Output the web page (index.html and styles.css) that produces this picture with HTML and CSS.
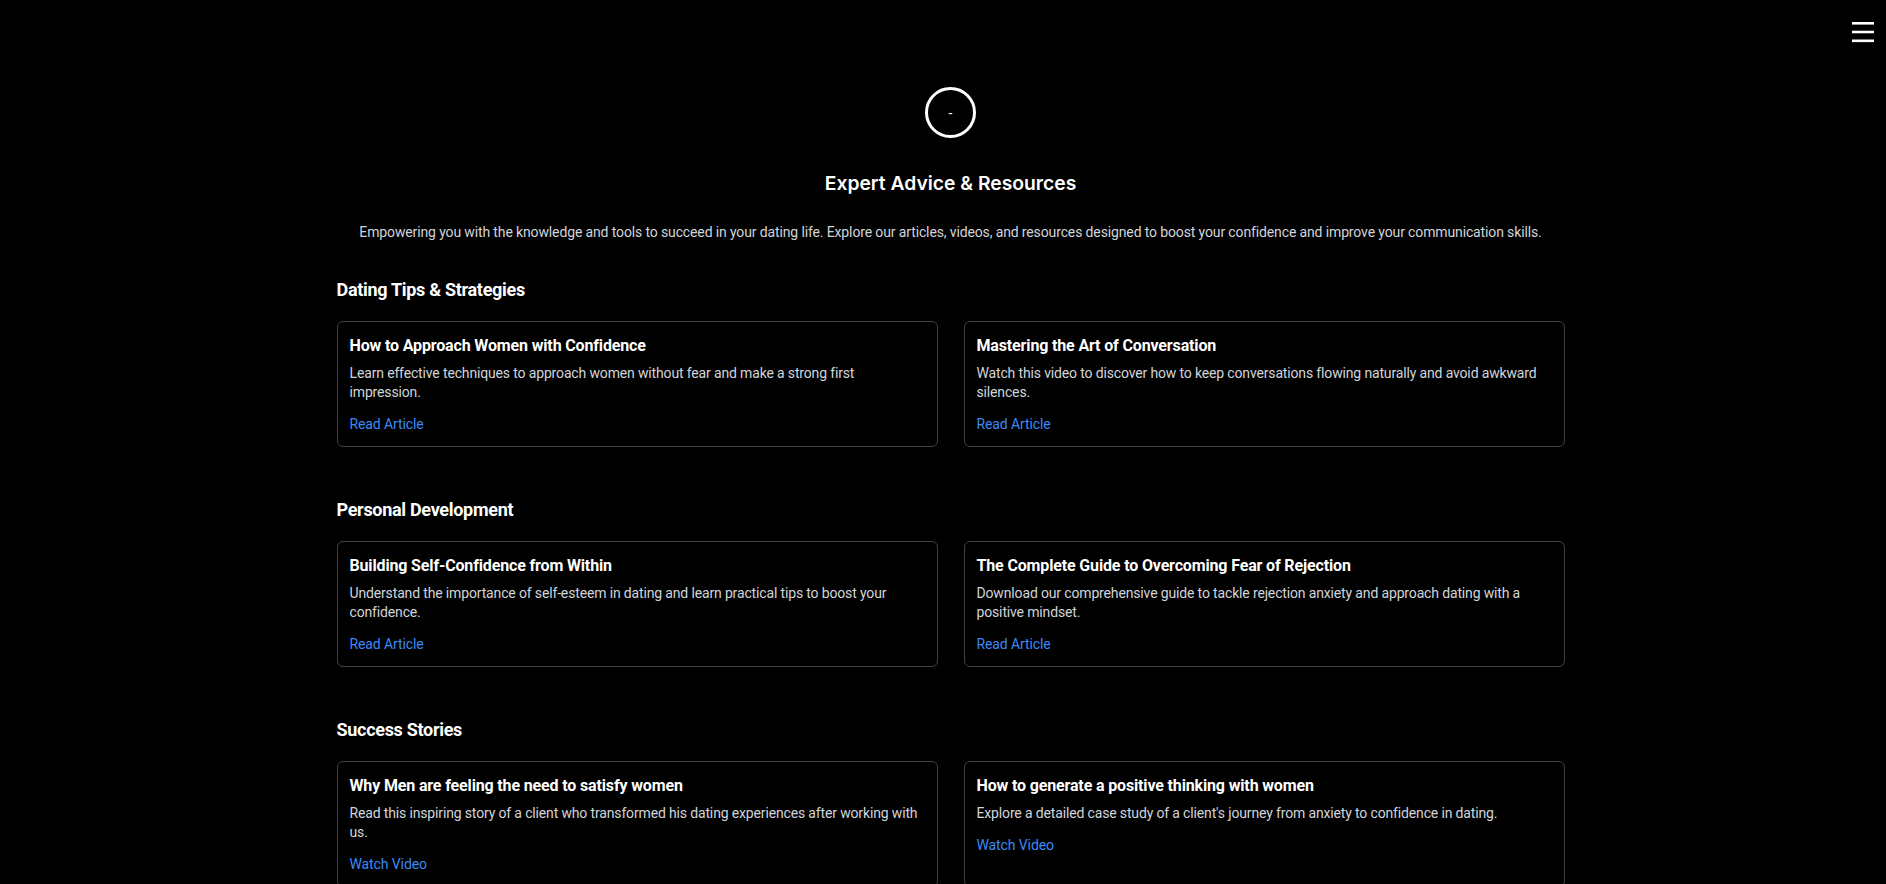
FILE: index.html
```html
<!DOCTYPE html>
<html lang="en">
<head>
<meta charset="utf-8">
<title>Expert Advice &amp; Resources</title>
<link rel="stylesheet" href="styles.css">
</head>
<body>
<button class="menu-btn" aria-label="Menu">
  <svg width="22" height="22" viewBox="0 0 22 22"><rect x="0" y="0" width="22" height="2.6" fill="#fff"/><rect x="0" y="8.7" width="22" height="2.6" fill="#fff"/><rect x="0" y="17.5" width="22" height="2.6" fill="#fff"/></svg>
</button>
<main class="page">
  <header class="hero">
    <div class="logo-circle">-</div>
    <h1 class="hero-title">Expert Advice &amp; Resources</h1>
    <p class="hero-sub">Empowering you with the knowledge and tools to succeed in your dating life. Explore our articles, videos, and resources designed to boost your confidence and improve your communication skills.</p>
  </header>

  <section class="section">
    <h2 class="section-title">Dating Tips &amp; Strategies</h2>
    <div class="cards">
      <article class="card">
        <h3 class="card-title">How to Approach Women with Confidence</h3>
        <p class="card-text">Learn effective techniques to approach women without fear and make a strong first impression.</p>
        <a class="card-link" href="#">Read Article</a>
      </article>
      <article class="card">
        <h3 class="card-title">Mastering the Art of Conversation</h3>
        <p class="card-text">Watch this video to discover how to keep conversations flowing naturally and avoid awkward silences.</p>
        <a class="card-link" href="#">Read Article</a>
      </article>
    </div>
  </section>

  <section class="section">
    <h2 class="section-title">Personal Development</h2>
    <div class="cards">
      <article class="card">
        <h3 class="card-title">Building Self-Confidence from Within</h3>
        <p class="card-text">Understand the importance of self-esteem in dating and learn practical tips to boost your confidence.</p>
        <a class="card-link" href="#">Read Article</a>
      </article>
      <article class="card">
        <h3 class="card-title">The Complete Guide to Overcoming Fear of Rejection</h3>
        <p class="card-text">Download our comprehensive guide to tackle rejection anxiety and approach dating with a positive mindset.</p>
        <a class="card-link" href="#">Read Article</a>
      </article>
    </div>
  </section>

  <section class="section">
    <h2 class="section-title">Success Stories</h2>
    <div class="cards">
      <article class="card">
        <h3 class="card-title">Why Men are feeling the need to satisfy women</h3>
        <p class="card-text">Read this inspiring story of a client who transformed his dating experiences after working with us.</p>
        <a class="card-link" href="#">Watch Video</a>
      </article>
      <article class="card">
        <h3 class="card-title">How to generate a positive thinking with women</h3>
        <p class="card-text">Explore a detailed case study of a client's journey from anxiety to confidence in dating.</p>
        <a class="card-link" href="#">Watch Video</a>
      </article>
    </div>
  </section>
</main>
</body>
</html>
```

FILE: styles.css
```css
* { box-sizing: border-box; }

html, body {
  margin: 0;
  padding: 0;
  background: #000;
  color: #fff;
  font-family: Roboto, "Liberation Sans", sans-serif;
}

.menu-btn {
  position: fixed;
  top: 22px;
  right: 12px;
  width: 22px;
  height: 22px;
  padding: 0;
  margin: 0;
  border: 0;
  background: transparent;
  display: flex;
  cursor: pointer;
}

.page {
  padding: 87px 0 40px 15px;
}

.hero {
  display: flex;
  flex-direction: column;
  align-items: center;
}

.logo-circle {
  width: 51px;
  height: 51px;
  border: 3px solid #fff;
  border-radius: 50%;
  display: flex;
  align-items: center;
  justify-content: center;
  font-size: 14px;
  line-height: 1;
  color: #fff;
}

.hero-title {
  margin: 31px 0 26px;
  font-family: Inter, Roboto, sans-serif;
  font-size: 19.3px;
  line-height: 28px;
  font-weight: 600;
}

.hero-sub {
  margin: 0 0 34px;
  font-size: 14px;
  line-height: 19px;
  letter-spacing: -0.13px;
  color: #d1d5db;
  text-align: center;
}

.section {
  width: 1228px;
  margin: 0 auto 49px;
}

.section-title {
  margin: 0 0 17px;
  font-size: 18px;
  line-height: 28px;
  font-weight: 700;
  letter-spacing: -0.3px;
}

.cards {
  display: grid;
  grid-template-columns: 1fr 1fr;
  gap: 26px;
}

.card {
  border: 1px solid #3b404c;
  border-radius: 6px;
  padding: 12px;
  display: flex;
  flex-direction: column;
  align-items: flex-start;
  min-height: 125px;
}

.card-title {
  margin: 0 0 6px;
  font-size: 16px;
  line-height: 24px;
  font-weight: 700;
  letter-spacing: -0.15px;
}

.card-text {
  margin: 0 0 13px;
  font-size: 14px;
  line-height: 19px;
  letter-spacing: -0.15px;
  color: #d1d5db;
}

.card-link {
  font-size: 14px;
  line-height: 19px;
  letter-spacing: -0.1px;
  color: #3b8af6;
  text-decoration: none;
}
```
